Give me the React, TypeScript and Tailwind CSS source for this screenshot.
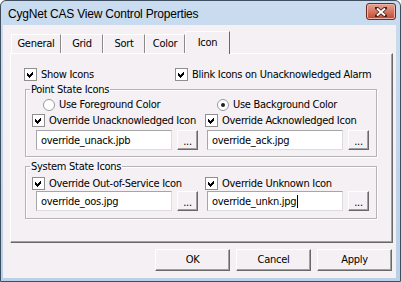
import React from 'react';

type TCheckProps = {
  checked?: boolean;
  label: string;
};

const CheckBox = ({ checked = false, label }: TCheckProps) => (
  <label className="flex h-[13px] items-center gap-[4px] whitespace-nowrap">
    <span className="flex h-[13px] w-[13px] shrink-0 items-center justify-center border border-[#8f8f8f] bg-white">
      {checked && (
        <svg width="9" height="9" viewBox="0 0 9 9" shapeRendering="crispEdges">
          <polygon points="1,3 3,5 7,1 7,4 3,8 1,6" fill="#000" />
        </svg>
      )}
    </span>
    <span className="leading-[13px]">{label}</span>
  </label>
);

const Radio = ({ checked = false, label }: TCheckProps) => (
  <label className="flex h-[13px] items-center gap-[4px] whitespace-nowrap">
    <span className="flex h-[12px] w-[12px] shrink-0 items-center justify-center rounded-full border border-[#9a9a9a] bg-white">
      {checked && <span className="h-[4px] w-[4px] rounded-full bg-[#222]" />}
    </span>
    <span className="leading-[13px]">{label}</span>
  </label>
);

const TextBox = ({ value, caret = false }: { value: string; caret?: boolean }) => (
  <div className="flex h-[20px] w-[136px] items-center border border-[#a6a6a6] border-b-[#dcdcdc] border-r-[#dcdcdc] bg-white pl-[4px]">
    <span className="leading-[13px]">{value}</span>
    {caret && <span className="ml-[1px] h-[13px] w-[1px] bg-black" />}
  </div>
);

const BrowseButton = () => (
  <button className="flex h-[20px] w-[21px] items-end justify-center border border-b-[#696969] border-l-white border-r-[#696969] border-t-white bg-[#f4f0f4] pb-[3px] leading-[8px] shadow-[inset_-1px_-1px_0_#a0a0a0]">
    ...
  </button>
);

const DialogButton = ({ label }: { label: string }) => (
  <button className="flex h-[22px] w-[75px] items-center justify-center border border-b-[#696969] border-l-white border-r-[#696969] border-t-white bg-[#f4f0f4] shadow-[inset_-1px_-1px_0_#a0a0a0]">
    {label}
  </button>
);

const TABS = [
  { label: 'General', width: 'w-[50px]' },
  { label: 'Grid', width: 'w-[42px]' },
  { label: 'Sort', width: 'w-[42px]' },
  { label: 'Color', width: 'w-[40px]' },
];

export default function App() {
  return (
    <div className="flex h-[282px] w-[401px] flex-col rounded-t-[6px] border border-[#3f4e5e] bg-gradient-to-b from-[#cadcef] to-[#b9d0e9] font-['DejaVu_Sans_Condensed','Liberation_Sans',sans-serif] text-[11px] tracking-[-0.28px] text-black">
      {/* title bar */}
      <div className="flex h-[24px] shrink-0 items-center justify-between pl-[7px] pr-[4px]">
        <span className="pt-[1px] font-['Liberation_Sans',sans-serif] text-[12px] tracking-[-0.2px]">
          CygNet CAS View Control Properties
        </span>
        <div className="mb-[3px] flex h-[17px] w-[30px] items-center justify-center rounded-[3px] border border-[#6b2b20] bg-gradient-to-b from-[#e3a594] to-[#c2442c] shadow-[inset_0_0_0_1px_#eab5a6]">
          <svg width="12" height="10" viewBox="0 0 12 10">
            <path d="M1.5 1 L10.5 9 M10.5 1 L1.5 9" stroke="#4a2018" strokeWidth="3.6" strokeLinecap="square" />
            <path d="M2 1.5 L10 8.5 M10 1.5 L2 8.5" stroke="#fff" strokeWidth="2" />
          </svg>
        </div>
      </div>

      {/* client area */}
      <div className="mb-[3px] ml-[2px] mr-[4px] flex flex-1 flex-col bg-[#f4f0f4]">
        {/* tabs */}
        <div className="ml-[8px] mt-[6px] flex h-[22px] items-end">
          {TABS.map((tab) => (
            <div
              key={tab.label}
              className={`flex h-[19px] ${tab.width} items-center justify-center border-l border-r border-t border-l-white border-r-[#8a8a8a] border-t-white`}
            >
              {tab.label}
            </div>
          ))}
          <div className="relative z-10 -mb-[1px] flex h-[23px] w-[45px] items-start justify-center border-l border-r border-t border-l-white border-r-[#696969] border-t-white bg-[#f4f0f4] pt-[3px]">
            Icon
          </div>
        </div>

        {/* tab panel */}
        <div className="ml-[7px] flex h-[190px] w-[383px] flex-col border border-b-[#696969] border-l-white border-r-[#696969] border-t-white shadow-[inset_-1px_-1px_0_#a0a0a0]">
          <div className="ml-[13px] mt-[14px] flex">
            <div className="w-[151px]">
              <CheckBox checked label="Show Icons" />
            </div>
            <CheckBox checked label="Blink Icons on Unacknowledged Alarm" />
          </div>

          <fieldset className="ml-[14px] mt-[2px] h-[74px] w-[352px] border border-[#b4b4b4] shadow-[inset_1px_1px_0_#fff,1px_1px_0_#fff]">
            <legend className="ml-[4px] px-[1px] leading-[13px]">Point State Icons</legend>
            <div className="mt-[2px] flex pl-[17px]">
              <div className="w-[174px]">
                <Radio label="Use Foreground Color" />
              </div>
              <Radio checked label="Use Background Color" />
            </div>
            <div className="mt-[3px] flex pl-[6px]">
              <div className="w-[173px]">
                <CheckBox checked label="Override Unacknowledged Icon" />
              </div>
              <CheckBox checked label="Override Acknowledged Icon" />
            </div>
            <div className="mt-[3px] flex gap-[5px] pl-[10px]">
              <TextBox value="override_unack.jpb" />
              <BrowseButton />
              <div className="ml-[4px]">
                <TextBox value="override_ack.jpg" />
              </div>
              <BrowseButton />
            </div>
          </fieldset>

          <fieldset className="ml-[14px] mt-[3px] h-[59px] w-[352px] border border-[#b4b4b4] shadow-[inset_1px_1px_0_#fff,1px_1px_0_#fff]">
            <legend className="ml-[4px] px-[1px] leading-[13px]">System State Icons</legend>
            <div className="mt-[4px] flex pl-[6px]">
              <div className="w-[173px]">
                <CheckBox checked label="Override Out-of-Service Icon" />
              </div>
              <CheckBox checked label="Override Unknown Icon" />
            </div>
            <div className="mt-[1px] flex gap-[5px] pl-[10px]">
              <TextBox value="override_oos.jpg" />
              <BrowseButton />
              <div className="ml-[4px]">
                <TextBox value="override_unkn.jpg" caret />
              </div>
              <BrowseButton />
            </div>
          </fieldset>
        </div>

        {/* dialog buttons */}
        <div className="mr-[4px] mt-[6px] flex justify-end gap-[6px]">
          <DialogButton label="OK" />
          <DialogButton label="Cancel" />
          <DialogButton label="Apply" />
        </div>
      </div>
    </div>
  );
}
